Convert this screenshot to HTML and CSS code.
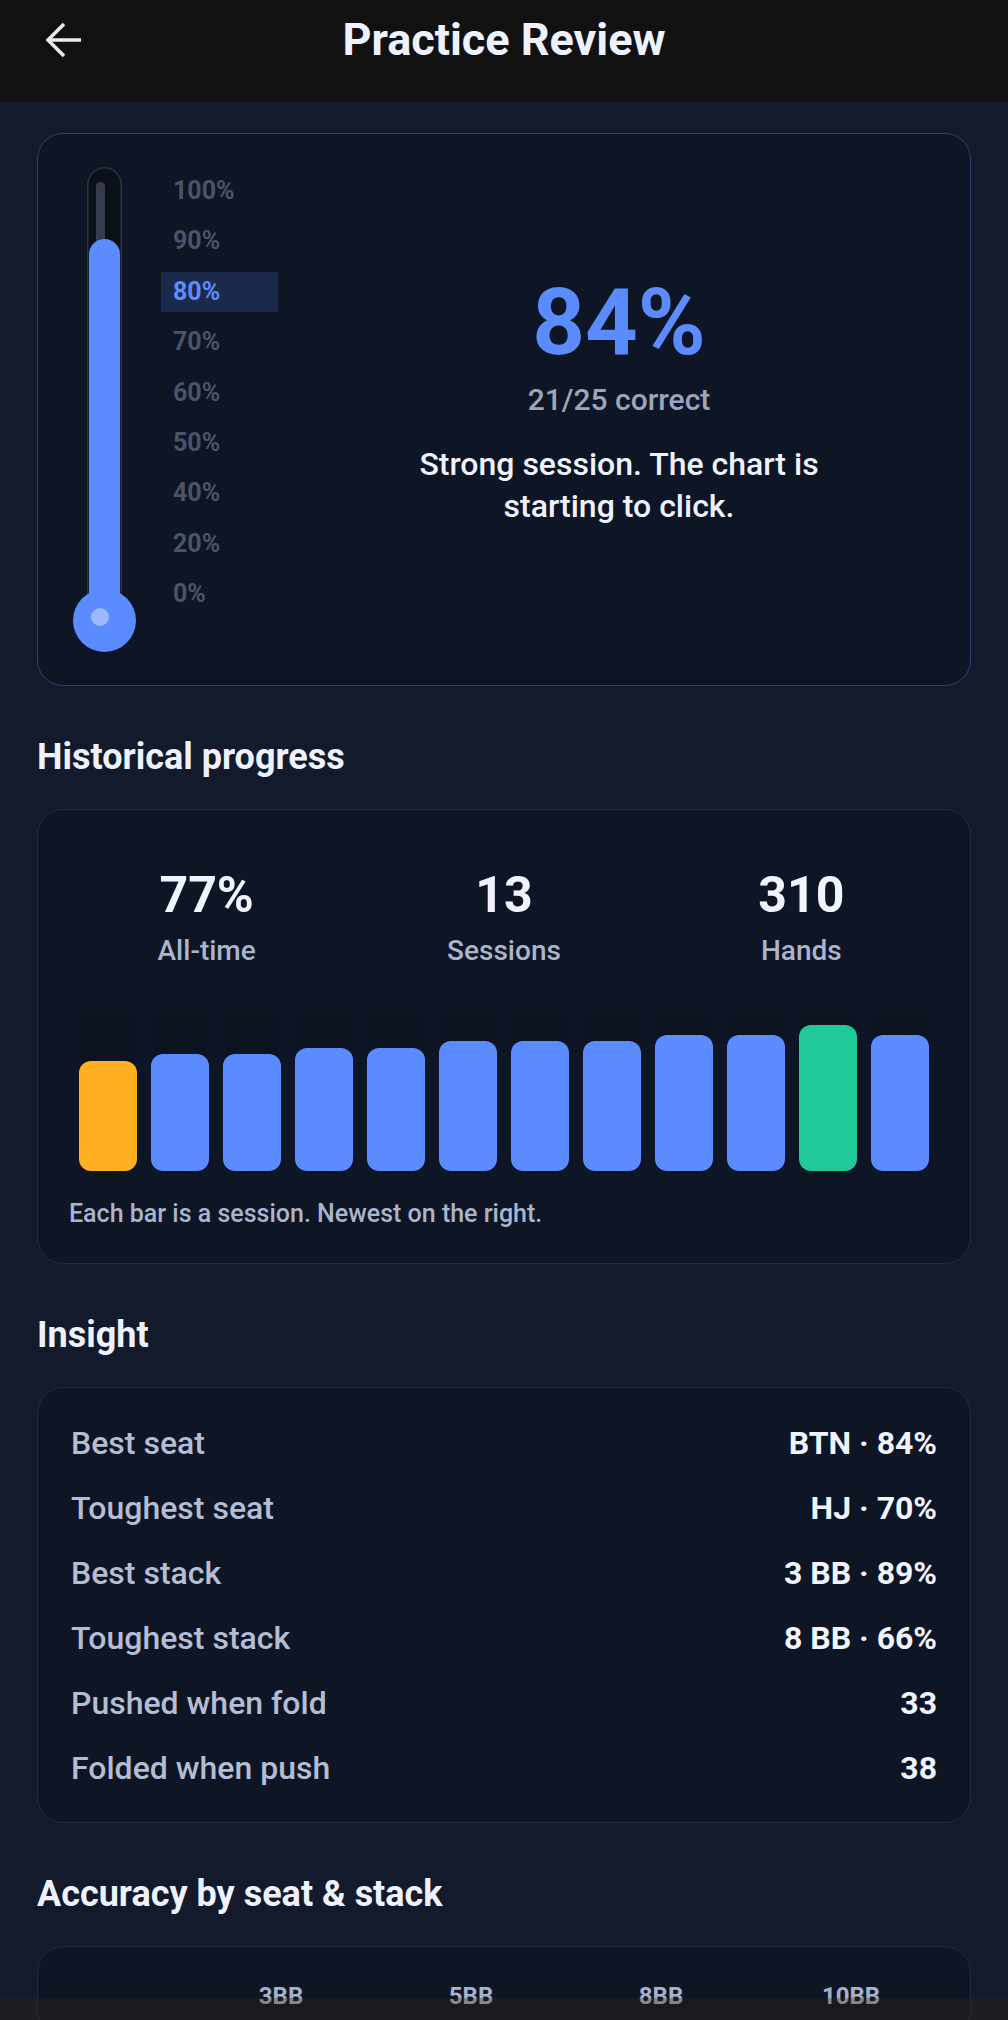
FILE: index.html
```html
<!DOCTYPE html>
<html>
<head>
    <title>Practice Review</title>
    <link rel="stylesheet" href="styles.css">
</head>
<body>
    <header class="topbar">
        <a class="back" href="#">
            <svg viewBox="0 0 36 36" width="36" height="36">
                <path d="M36 18H3M19 2L3 18L19 34" fill="none" stroke="#ececec" stroke-width="3.5"/>
            </svg>
        </a>
        <h1 class="title">Practice Review</h1>
        <span></span>
    </header>

    <main class="page">
        <section class="card hero">
            <svg class="thermo" viewBox="0 0 63 485" width="63" height="485">
                <rect x="14.75" y="0.75" width="33.5" height="460" rx="16.75" fill="#0a0f1a" stroke="#2a3343" stroke-width="1.5"/>
                <rect x="23" y="15" width="9" height="80" rx="4.5" fill="#363c4b"/>
                <rect x="16" y="72" width="31" height="390" rx="15.5" fill="#5b8cff"/>
                <circle cx="31.5" cy="453.5" r="31.5" fill="#5b8cff"/>
                <circle cx="27" cy="450" r="9" fill="#9cb9ff"/>
            </svg>
            <ul class="scale">
                <li>100%</li>
                <li>90%</li>
                <li class="active">80%</li>
                <li>70%</li>
                <li>60%</li>
                <li>50%</li>
                <li>40%</li>
                <li>20%</li>
                <li>0%</li>
            </ul>
            <div class="score">
                <div class="pct">84%</div>
                <div class="count">21/25 correct</div>
                <p class="verdict">Strong session. The chart is starting to click.</p>
            </div>
        </section>

        <h2 class="section-title">Historical progress</h2>
        <section class="card history">
            <div class="stats">
                <div class="stat">
                    <div class="stat-num">77%</div>
                    <div class="stat-label">All-time</div>
                </div>
                <div class="stat">
                    <div class="stat-num">13</div>
                    <div class="stat-label">Sessions</div>
                </div>
                <div class="stat">
                    <div class="stat-num">310</div>
                    <div class="stat-label">Hands</div>
                </div>
            </div>
            <div class="bars">
                <div class="bar-track"><div class="bar warn" style="height:110px"></div></div>
                <div class="bar-track"><div class="bar" style="height:117px"></div></div>
                <div class="bar-track"><div class="bar" style="height:117px"></div></div>
                <div class="bar-track"><div class="bar" style="height:123px"></div></div>
                <div class="bar-track"><div class="bar" style="height:123px"></div></div>
                <div class="bar-track"><div class="bar" style="height:130px"></div></div>
                <div class="bar-track"><div class="bar" style="height:130px"></div></div>
                <div class="bar-track"><div class="bar" style="height:130px"></div></div>
                <div class="bar-track"><div class="bar" style="height:136px"></div></div>
                <div class="bar-track"><div class="bar" style="height:136px"></div></div>
                <div class="bar-track"><div class="bar best" style="height:146px"></div></div>
                <div class="bar-track"><div class="bar" style="height:136px"></div></div>
            </div>
            <p class="caption">Each bar is a session. Newest on the right.</p>
        </section>

        <h2 class="section-title">Insight</h2>
        <section class="card insight">
            <div class="row"><span class="key">Best seat</span><span class="val">BTN · 84%</span></div>
            <div class="row"><span class="key">Toughest seat</span><span class="val">HJ · 70%</span></div>
            <div class="row"><span class="key">Best stack</span><span class="val">3 BB · 89%</span></div>
            <div class="row"><span class="key">Toughest stack</span><span class="val">8 BB · 66%</span></div>
            <div class="row"><span class="key">Pushed when fold</span><span class="val">33</span></div>
            <div class="row"><span class="key">Folded when push</span><span class="val">38</span></div>
        </section>

        <h2 class="section-title">Accuracy by seat &amp; stack</h2>
        <section class="card matrix">
            <div class="grid">
                <span></span>
                <span class="col-head">3BB</span>
                <span class="col-head">5BB</span>
                <span class="col-head">8BB</span>
                <span class="col-head">10BB</span>
            </div>
        </section>
    </main>

    <div class="navbar"></div>
</body>
</html>
```

FILE: styles.css
```css
body {
    margin: 0;
    font-family: Roboto, "Noto Sans", sans-serif;
    background-color: #121a2c;
    color: #eef2ff;
}
.topbar {
    background-color: #111111;
    height: 80px;
    padding-bottom: 22px;
    display: grid;
    grid-template-columns: 120px 1fr 120px;
    align-items: center;
}
.back {
    display: block;
    width: 36px;
    height: 36px;
    margin-left: 45px;
}
.back svg {
    display: block;
}
.title {
    margin: 0;
    text-align: center;
    font-size: 45px;
    font-weight: 700;
    line-height: 80px;
    color: #eef2ff;
}
.page {
    padding: 31px 37px 0;
}
.card {
    background-color: #0e1525;
    border: 1px solid #232c3d;
    border-radius: 26px;
}

/* session score */
.hero {
    border-color: #2a4272;
    display: flex;
    gap: 25px;
    padding: 33px 35px;
}
.thermo {
    flex: none;
    display: block;
}
.scale {
    list-style: none;
    margin: 4px 0 0;
    padding: 0;
    width: 117px;
    flex: none;
    display: flex;
    flex-direction: column;
    gap: 10.4px;
}
.scale li {
    height: 40px;
    line-height: 40px;
    padding-left: 12px;
    font-size: 25px;
    font-weight: 700;
    color: #4b5467;
}
.scale li.active {
    background-color: #1b2a4a;
    color: #5b8cff;
}
.score {
    flex: 1;
    text-align: center;
    padding-top: 106px;
}
.pct {
    font-size: 92px;
    font-weight: 700;
    line-height: 100px;
    color: #5b8cff;
}
.count {
    margin-top: 7px;
    font-size: 30px;
    font-weight: 500;
    line-height: 40px;
    color: #9ca5bb;
}
.verdict {
    max-width: 440px;
    margin: 23px auto 0;
    font-size: 32px;
    font-weight: 500;
    line-height: 42px;
    color: #eef2ff;
}

.section-title {
    margin: 49px 0 30px;
    font-size: 36px;
    font-weight: 700;
    line-height: 44px;
    color: #eef2ff;
}

/* history */
.history {
    padding: 20px 20px 33px;
}
.stats {
    display: grid;
    grid-template-columns: repeat(3, 1fr);
    text-align: center;
    padding-top: 35px;
}
.stat-num {
    font-size: 50px;
    font-weight: 700;
    line-height: 60px;
    color: #f1f4ff;
}
.stat-label {
    margin-top: 8px;
    font-size: 28px;
    font-weight: 500;
    line-height: 36px;
    color: #aab4cc;
}
.bars {
    display: flex;
    gap: 14px;
    padding: 0 21px;
    margin-top: 41px;
}
.bar-track {
    flex: 1;
    height: 161px;
    border-radius: 12px;
    background-color: #0c1321;
    display: flex;
    align-items: flex-end;
}
.bar {
    width: 100%;
    border-radius: 12px;
    background-color: #5b8cff;
}
.bar.warn {
    background-color: #ffb020;
}
.bar.best {
    background-color: #20c997;
}
.caption {
    margin: 27px 0 0;
    padding-left: 11px;
    font-size: 25px;
    font-weight: 500;
    line-height: 32px;
    color: #aab4cc;
}

/* insight */
.insight {
    padding: 22px 33px;
}
.row {
    display: flex;
    justify-content: space-between;
    align-items: center;
    height: 65px;
    font-size: 32px;
}
.key {
    font-weight: 500;
    color: #b4bdd3;
}
.val {
    font-weight: 700;
    color: #f1f4ff;
}

/* matrix */
.matrix {
    padding: 33px 24px 24px;
}
.grid {
    display: grid;
    grid-template-columns: 124px repeat(4, 1fr);
    align-items: center;
}
.col-head {
    text-align: center;
    font-size: 24px;
    font-weight: 700;
    line-height: 32px;
    color: #a7b1c9;
}

.navbar {
    position: fixed;
    left: 0;
    right: 0;
    bottom: 0;
    height: 22px;
    background-color: rgba(60, 36, 18, 0.3);
}
```
